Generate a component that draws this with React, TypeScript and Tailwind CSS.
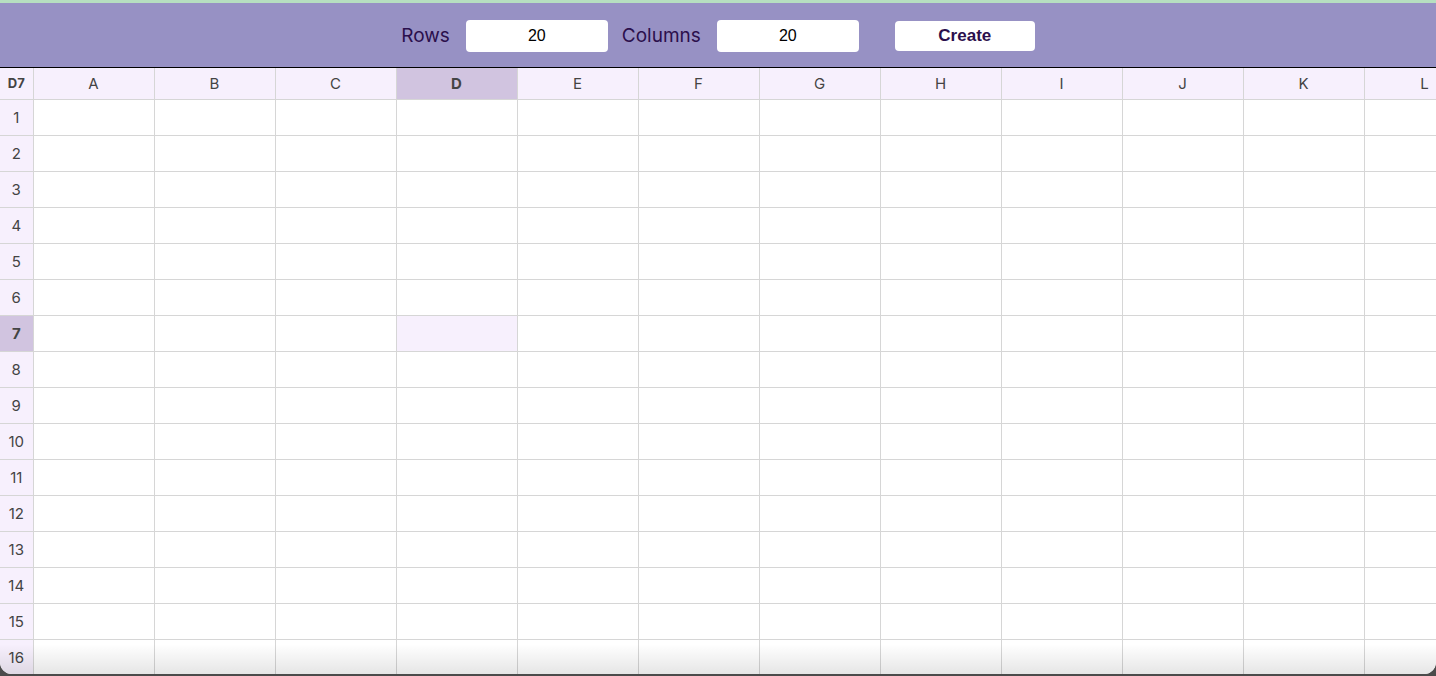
import React from 'react'

const COLS = Array.from({ length: 20 }, (_, i) => String.fromCharCode(65 + i))
const ROWS = Array.from({ length: 20 }, (_, i) => i + 1)

const selCol = 'D'
const selRow = 7

export default function App() {
  return (
    <div className="h-[676px] w-[1436px] bg-[#4b4b4b] overflow-hidden">
      <div className="relative h-[674px] w-full overflow-hidden rounded-b-[12px] bg-white font-['Inter',sans-serif]">
        <div className="h-[3px] bg-[#b6dfc0]" />
        <div className="flex h-[65px] items-center justify-center border-b border-black bg-[#9791c4] pt-[2px]">
          <span className="text-[19px] text-[#2b0f4c]">Rows</span>
          <input
            defaultValue="20"
            className="ml-[16px] h-[32px] w-[142px] rounded-[4px] bg-white text-center font-['Liberation_Sans',sans-serif] text-[16px] text-black outline-none"
          />
          <span className="ml-[14px] text-[19px] text-[#2b0f4c]">Columns</span>
          <input
            defaultValue="20"
            className="ml-[16px] h-[32px] w-[142px] rounded-[4px] bg-white text-center font-['Liberation_Sans',sans-serif] text-[16px] text-black outline-none"
          />
          <button className="ml-[36px] h-[30px] w-[140px] rounded-[4px] bg-white font-['Liberation_Sans',sans-serif] text-[17px] font-bold text-[#2b0f4c]">
            Create
          </button>
        </div>

        <table className="border-collapse table-fixed">
          <thead>
            <tr className="h-[31px]">
              <th className="w-[33px] min-w-[33px] border-r border-b border-[#d6d6d6] bg-[#f7f0fd] pt-[1px] text-[13px] font-bold text-[#444]">
                D7
              </th>
              {COLS.map((c) => (
                <th
                  key={c}
                  className={`w-[121px] min-w-[121px] border-r border-b border-[#d6d6d6] pt-[1px] text-[15px] text-[#444] ${
                    c === selCol ? 'bg-[#d1c4e0] font-bold' : 'bg-[#f7f0fd] font-normal'
                  }`}
                >
                  {c}
                </th>
              ))}
            </tr>
          </thead>
          <tbody>
            {ROWS.map((r) => (
              <tr key={r} className="h-[36px]">
                <td
                  className={`border-r border-b border-[#d6d6d6] pt-[2px] text-center text-[15px] text-[#444] ${
                    r === selRow ? 'bg-[#d1c4e0] font-bold' : 'bg-[#f7f0fd]'
                  }`}
                >
                  {r}
                </td>
                {COLS.map((c) => (
                  <td
                    key={c}
                    className={`border-r border-b border-[#d6d6d6] ${
                      r === selRow && c === selCol ? 'bg-[#f7f0fd]' : 'bg-white'
                    }`}
                  />
                ))}
              </tr>
            ))}
          </tbody>
        </table>

        {/* window shadow at the bottom edge */}
        <div className="pointer-events-none absolute bottom-0 left-0 right-0 h-[30px] bg-gradient-to-b from-transparent to-black/10" />
      </div>
    </div>
  )
}
